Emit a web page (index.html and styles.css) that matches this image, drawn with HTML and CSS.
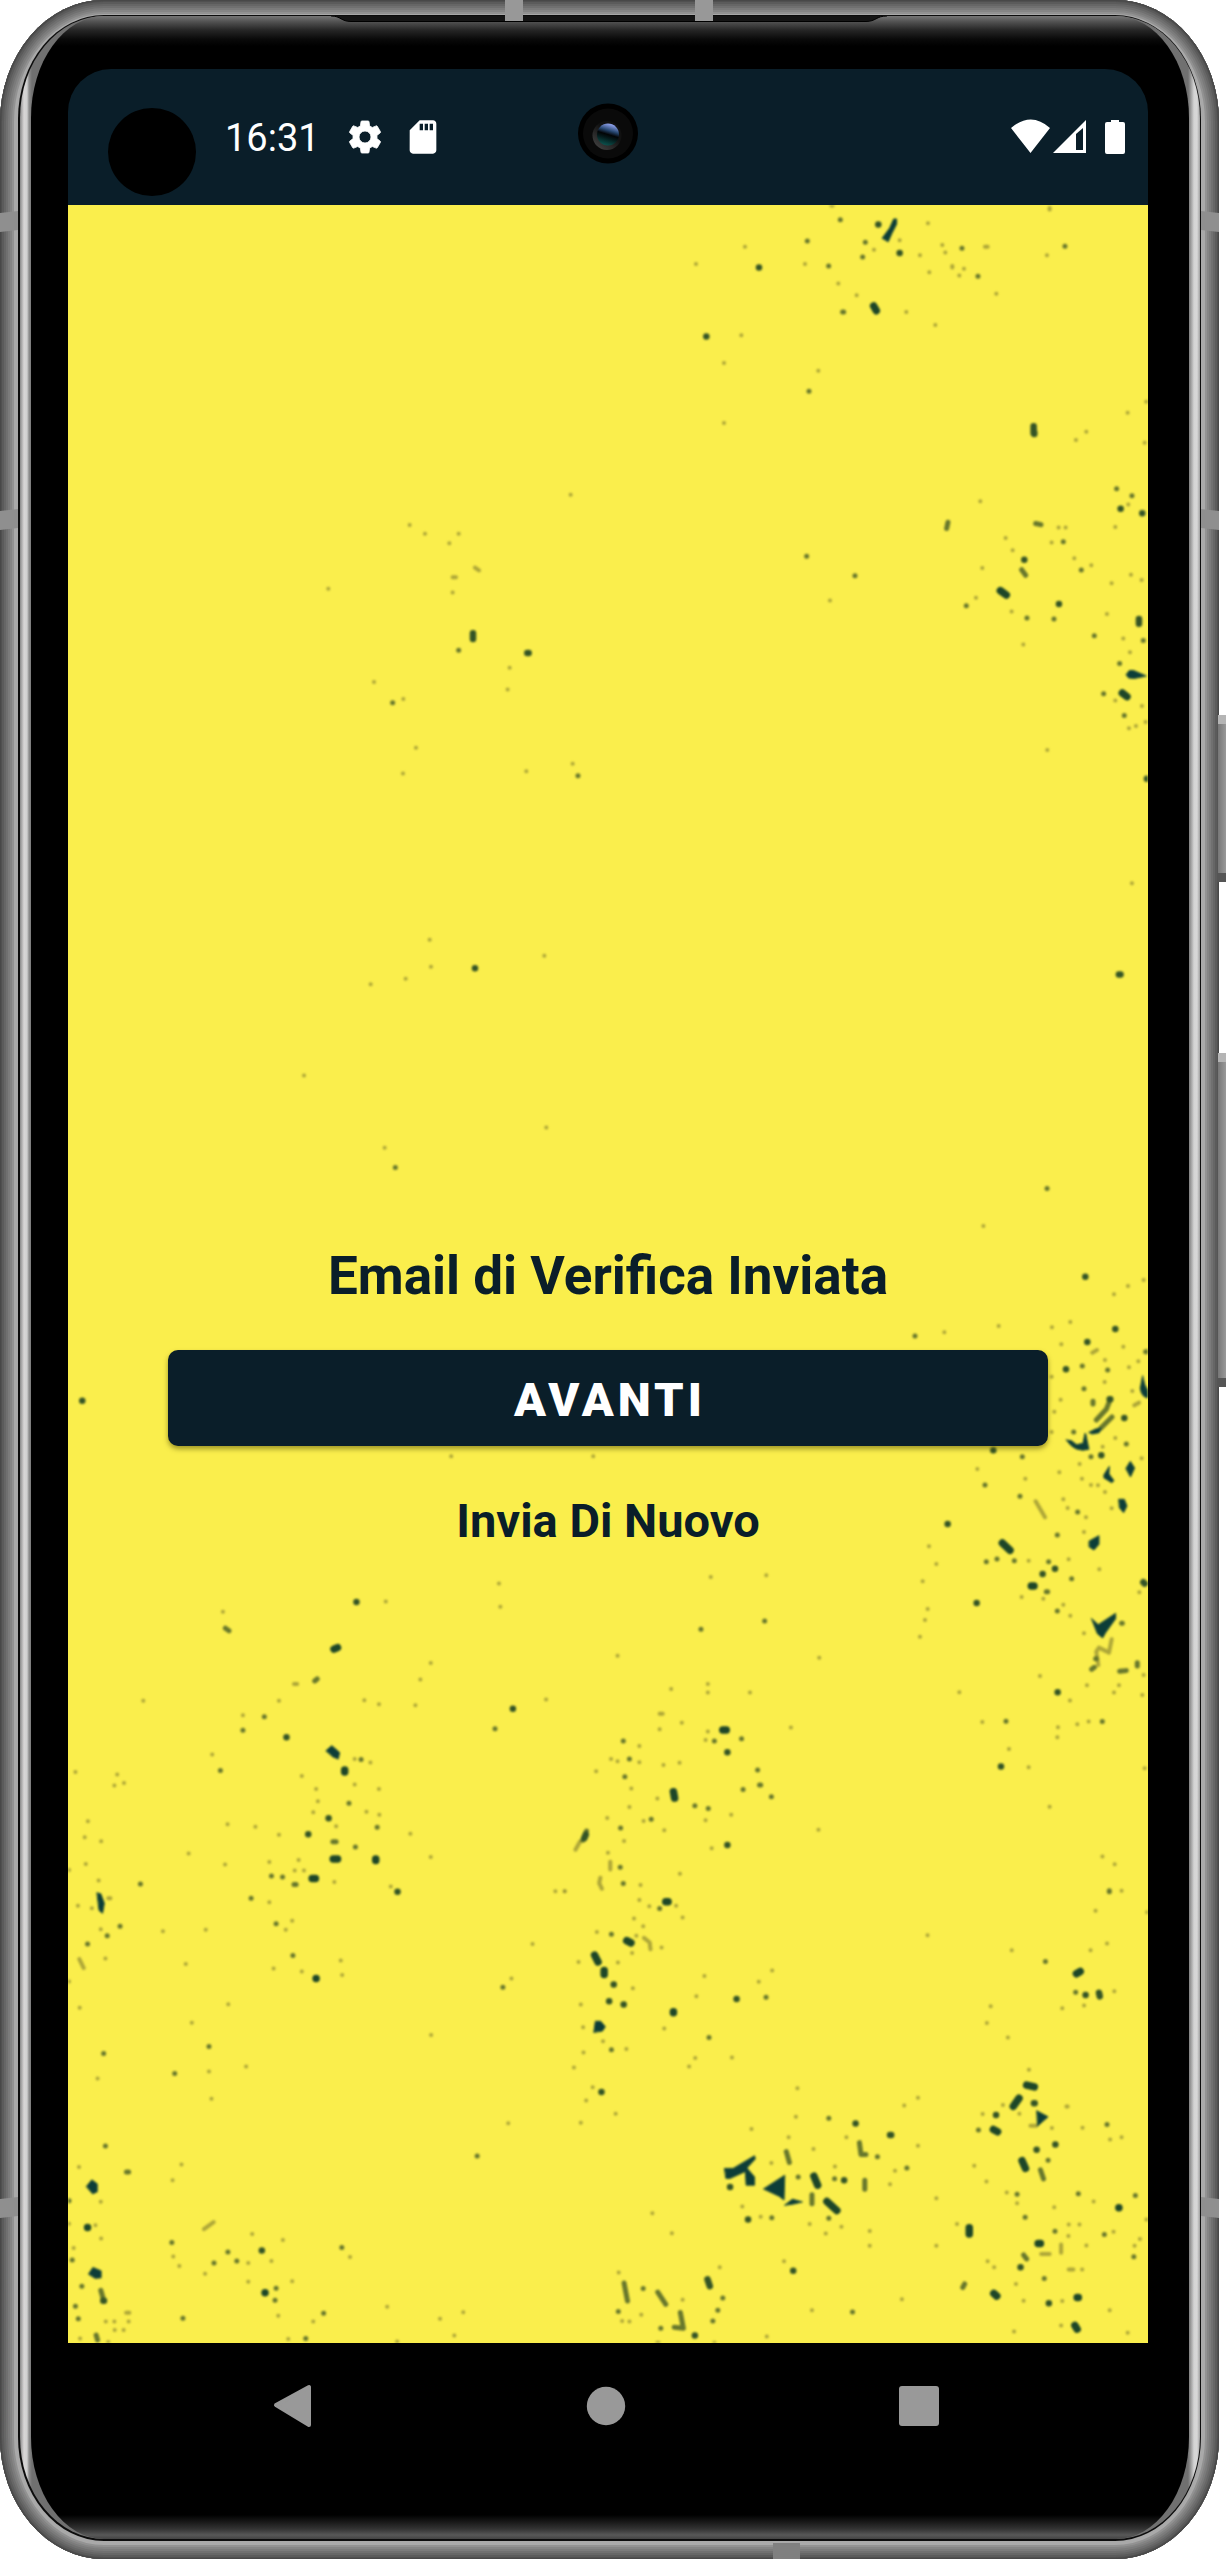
FILE: index.html
```
<!DOCTYPE html>
<html lang="it">
<head>
<meta charset="utf-8">
<title>Email di Verifica Inviata</title>
<link rel="stylesheet" href="styles.css">
</head>
<body>
<div class="device">
  <span class="side-key side-key-power"></span>
  <span class="side-key side-key-volume"></span>
  <div class="frame">
    <span class="band band-top band-t1"></span>
    <span class="band band-top band-t2"></span>
    <span class="band band-bottom"></span>
    <span class="band band-left band-l1"></span>
    <span class="band band-left band-l2"></span>
    <span class="band band-left band-l3"></span>
    <span class="band band-right band-l1"></span>
    <span class="band band-right band-l2"></span>
    <span class="band band-right band-l3"></span>
    <div class="seam">
      <div class="bevel">
        <div class="glass">
          <svg class="earpiece" viewBox="0 0 556 7"><path d="M0 0H556C545 0 545 5.500 535 5.500H20C10 5.500 10 0 0 0Z" fill="#151515"/><path d="M0 0C10 0 10 5.500 20 5.500H535C545 5.500 545 0 556 0" fill="none" stroke="#000" stroke-width="1"/></svg>
          <div class="screen">
            <header class="status">
              <span class="cutout"></span>
              <span class="clock">16:31</span>
              <svg class="icon gear" viewBox="0 0 24 24"><path d="M19.140 12.940c.04-.3.06-.61.06-.94 0-.32-.02-.64-.07-.94l2.030-1.580c.18-.14.23-.41.12-.61l-1.920-3.320c-.12-.22-.37-.29-.59-.22l-2.390.96c-.5-.38-1.030-.7-1.620-.94l-.36-2.540c-.04-.24-.24-.41-.48-.41h-3.840c-.24 0-.43.17-.47.41l-.36 2.540c-.59.24-1.130.57-1.620.94l-2.390-.96c-.22-.08-.47 0-.59.22L2.740 8.870c-.12.21-.08.47.12.61l2.030 1.580c-.05.3-.09.63-.09.94s.02.64.07.94l-2.030 1.580c-.18.14-.23.41-.12.61l1.920 3.320c.12.22.37.29.59.22l2.390-.96c.5.38 1.030.7 1.620.94l.36 2.540c.05.24.24.41.48.41h3.840c.24 0 .44-.17.47-.41l.36-2.540c.59-.24 1.130-.56 1.620-.94l2.390.96c.22.08.47 0 .59-.22l1.920-3.320c.12-.22.07-.47-.12-.61zM12 15.600a3.600 3.600 0 1 1 0-7.200 3.600 3.600 0 0 1 0 7.200z" fill="#fff" stroke="#fff" stroke-width=".5"/></svg>
              <svg class="icon" viewBox="0 0 24 24"><path fill="#fff" d="M18 2h-8L4.020 8 4 20c0 1.100.9 2 2 2h12c1.100 0 2-.9 2-2V4c0-1.100-.9-2-2-2zm-6 6h-2V4h2zm3 0h-2V4h2zm3 0h-2V4h2z"/></svg>
              <svg class="signals" viewBox="0 0 116 36"><path fill="#fff" d="M0 9Q20-8 39 9L19.500 34ZM42 34 75 1V34ZM94 5q0-2 2-2h4V1h8v2h4q2 0 2 2v28q0 2-2 2H96q-2 0-2-2Z"/><path fill="#0a1e29" d="M65 15 72 9V31H65Z"/></svg>
              <svg class="camera" viewBox="0 0 60 60"><defs><linearGradient id="lens" x1=".65" y1="0" x2=".35" y2="1"><stop offset=".05" stop-color="#8b9ee8"/><stop offset=".32" stop-color="#26466f"/><stop offset=".5" stop-color="#020405"/><stop offset=".65" stop-color="#04191a"/><stop offset="1" stop-color="#0b5550"/></linearGradient><linearGradient id="rim" x1="0" y1="1" x2=".8" y2="0"><stop stop-color="#4a4a4a"/><stop offset=".65" stop-color="#111"/></linearGradient></defs><circle cx="30" cy="30" r="30" fill="#000"/><circle cx="30" cy="30" r="25" fill="#0a0a0a"/><circle cx="29" cy="32" r="14.500" fill="url(#rim)"/><circle cx="30" cy="31" r="11" fill="url(#lens)"/></svg>
            </header>
            <main class="content">
              <svg class="speckles" viewBox="69 205 1080 2138">
                <g class="flecks" transform="translate(640 200) scale(.3333 .3954)">
                  <path class="faint" d="M318 118h0M867 59h0M577 14h4M910 114h0M919 133h0M843 140h0M871 183h0M940 167v4M975 174h0M961 191h0M1038 118h8M1224 140h0M1072 237h0M1232 20v4M782 102h0M705 126h0M498 162h0M171 162h0M598 211h0M653 241h0M802 283h0M889 316h0M307 342h0M255 412h0M538 432h0M255 564h0M1466 538h0M1522 510h0M1342 586h0M1311 607h0M1517 614h0M1024 762h0M1280 828h0M1259 828h0M1238 866h0M1429 827h0M1121 886h0M1030 931h0M1011 1006h0M1306 906h0M1357 924h0M1476 948h0M1508 961h0M1418 969h0M1404 1047h0M1118 1041h0M1153 1124h0M1453 1109h0M1473 1144h0M1429 1266h0M1470 1336h0M1491 1330h0M1520 1320h0M1225 1391h0M1509 1280h0M573 1013h0M1100 855h0M1468 770h0"/>
                  <path class="mid" d="M505 104h0M679 107h0M671 144h0M569 167h0M611 283h3M510 484h0M969 122h0M1017 193h0M1278 117h0M503 901h0M648 950h0M982 1026h0M1164 1057h0M1245 1060h0M1273 864h0M1327 936h0M1433 730h0M1479 748h0M1442 1172h0M1513 1114h0M1366 1102h0M1394 1249h0M1456 1304h0M927 815l-4 16M1190 818l16 3M1148 935l12 14M604 50h0"/>
                  <path class="dark" d="M360 171h0M202 345h0M718 62h0M782 134h0M1260 1022h0M1156 910h0M1510 792h0M1445 781h0M1524 1464h0M1186 588v4M1184 572v18M1500 1060v12"/>
                  <path class="heavy" d="M704 268l8 12M1084 988l18 11M1450 1247l14 9"/>
                  <path class="chip" d="M730 96l22-25 12-23h9v13l-14 23-11 21zM1462 1200l9-10h13l38 14-35 6-17-1z"/>
                </g>
                <g class="flecks" transform="translate(860 1260) scale(.3333)">
                  <path class="faint" d="M256 217h0M807 78h0M854 60h0M634 186h0M419 198h0M765 103h0M607 253h0M700 278l14-8M738 300h0M810 322h0M838 304h0M793 260h0M578 350h0M737 366h0M820 393h0M826 436l14-8M605 419h0M586 455h0M578 516h0M769 534h0M848 595h0M731 560h0M662 612h0M601 637h0M669 656h0M696 675h0M717 676h0M738 696h0M758 745h0M613 718h0M626 744h0M681 772h0M675 816h0M355 627h0M499 656h0M210 859h0M232 912h0M191 964h0M206 1047h0M198 1080h0M183 1130h0M509 902h0M629 898h0M721 928h0M488 1011h0M553 1016h0M613 1034h0M634 1067h0M675 1120h0M543 1248h0M684 1276h0M780 1276h0M765 1298h0M854 1245h0M850 1305h0M301 1297h0M633 1322h0M370 1386h0M655 1393h0M689 1385h0M595 1432h0M597 1402h0M450 1467h0M509 1522h0M857 1525h0M530 724l28 48M841 997h0M718 1215l-6-40 8-12 30 15 8-40"/>
                  <path class="mid" d="M168 228h0M670 318h0M746 330h0M675 386h0M644 516h0M696 590h0M802 552h0M490 590h0M378 675h0M483 709h0M656 756h0M595 825h0M382 905h0M414 897h0M466 902h0M569 905h0M638 956h0M562 995h4M595 1053h0M790 1090h-2M835 1208v10M730 1385h0M441 1384h0M782 1234l20-2M702 424v8M860 275h4M712 480l30-32 8-20M725 505l34-34M698 1228l8-6M710 1196h2"/>
                  <path class="dark" d="M679 50h0M769 207h0M685 246h0M621 328h0M727 586h0M796 474h0M403 571h0M266 792h0M353 1029h0M588 926h0M551 942h0M596 1297h0M426 1520h0M853 967l4 4M752 418h2"/>
                  <path class="heavy" d="M430 849l23 22M517 978h8"/>
                  <path class="chip" d="M844 385l7-38q4 30 19 50v17q-23 0-26-29M622 540l15 2 16 12 19-4 6-30 2 1 10 47q-42 12-68-28M690 517l20-10 17-3-6 14-20 4zM801 625l13-21 13 20-12 26zM780 718h16l8 20-10 20-12-14zM691 843l29-16v26l-15 17-14-9zM734 646l17-27-1 23 15 20-7 6-24-15M698 1076l20 18 52-34v16l-30 42-9 16-15-12z"/>
                </g>
                <g class="flecks" transform="translate(60 1580) scale(.3571 .4974)">
                  <path class="faint" d="M915 43h0M1232 7h0M1236 54h0M459 64h0M236 243h0M616 243h0M658 209h9M855 242h0M896 250h0M1012 200h0M1041 167h0M1364 240h0M998 252h0M515 272h0M429 351h0M46 386h0M163 391h0M155 413h0M182 408h0M81 485h0M72 517h0M118 525h0M363 550h0M75 571h0M465 572h0M550 496h0M472 491h0M616 512h0M680 394h0M720 420h0M725 445h0M712 467h0M861 466h0M897 472h0M896 420h0M872 367h0M828 411h0M828 360h0M776 495h0M671 563h0M660 584h0M686 584h0M589 648h0M589 567h0M771 607h0M929 616h0M984 510h0M1041 557h0M111 604h0M138 640h6M92 660h0M53 655h0M28 583h0M117 702h0M130 761h0M57 762l12 18M28 807h0M58 860h0M291 706h0M411 703h0M355 772h0M653 685h0M635 703h0M601 781h0M680 787h0M789 765h0M793 794h0M474 853h0M372 890h0M420 988h0M427 1043h0M524 978h0M108 1002h0M1267 801h0M1326 732h0M1042 915h0M1390 626h0M1416 626h0M1258 1092h0M56 1180h0M343 1175h0M318 1207h0M117 1250h0M102 1297h0M118 1324h0M28 1294h0M41 1343h0M406 1305l27-14M627 1327h0M541 1315h0M320 1360h0M337 1379h0M530 1373h0M595 1369h0M815 1361h0M530 1411h0M653 1410h0M409 1395h0M614 1479h0M642 1526h0M712 1491h0M919 1461h0M1067 1485h0M1132 1472h0M1107 1519h0M188 1473h9M195 1491h0M156 1508h0M131 1491h0M155 1491h0M181 1508h0M59 1525h0M138 1532h0M947 1531h0"/>
                  <path class="mid" d="M466 97l10 5M723 199l-7 4M515 302h0M575 275h0M452 383h0M846 361h0M812 449h0M767 526h9M830 537h0M891 497h0M626 597h0M595 595h0M658 612h6M538 640h0M608 691h0M655 755h0M228 611h0M171 696h0M135 715h0M80 732h0M420 938h0M324 992h0M125 952h0M1221 299h0M1243 819h0M1171 1158h0M130 1138h0M189 1190h6M316 1332h0M473 1351h0M498 1369h0M434 1373h0M792 1342h0M608 1424h0M605 1448h0M741 1474h0M347 1484h0M691 1525h0M64 1420h0M37 1367h0M46 1460h0M54 1485h0M117 1428l8 20M104 1518l4 10M28 1248h0"/>
                  <path class="dark" d="M833 44h0M637 316h0M1271 259h0M698 511h0M948 627h0M568 1348h0M800 383h0M755 479h0"/>
                  <path class="heavy" d="M770 139l10-3M768 561h12M709 600h9M887 561v3M720 801h0M80 1302h0M577 1433h0M800 382v4"/>
                  <path class="dark" d="M124 1449h2"/>
                  <path class="chip" d="M748 343l16-10 22 14-4 13-14-4zM107 629l10 2 10 19-5 20-9-5zM77 1219l15-13 15 8v16l-12 4zM83 1395l12-13 23 7v14l-16 1z"/>
                </g>
                <g class="flecks" transform="translate(560 1640) scale(.3827 .4528)">
                  <path class="faint" d="M153 35h0M680 39h0M389 97h0M389 116h0M263 163h8M263 197h0M321 183h0M293 108h0M383 221h0M389 202h0M210 234h0M210 270h0M153 268h0M136 263h0M273 276h0M315 271h0M97 290h0M606 193h0M499 116h0M189 328h0M184 369h0M257 350h0M126 393h0M221 400h0M275 420h0M170 444h0M383 398h0M399 460h0M450 386h0M678 419h0M128 470h0M134 490v17M108 525l-3 12 7 12M210 574h0M213 541h0M316 516h0M15 555h0M306 587h0M236 588h0M323 613h0M196 615h0M220 632h0M99 645h0M202 653h0M268 679h0M222 658l15 10 2 15M51 711h0M154 712h0M191 691h0M380 742h0M359 787h0M193 769h0M522 755h0M557 730h0M63 855h0M57 805h0M115 886h0M176 903h0M64 911h0M39 944h0M275 858h0M452 922h0M356 923h0M340 942h0M88 988h0M71 1017h0M148 1046h0M57 1066h0M244 1266h0M295 1310h0M963 652h0M1420 478h0M1452 495h0M1470 554h0M1402 598h0M1537 601h0M1432 670h0M1389 685h0M1183 685h0M1282 368h0M1451 776h0M1372 807h0M1315 813h0M1128 809h0M1118 846h0M1173 878h0M1228 949h0M623 990h0M619 1053h0M503 1080h0M600 1098h0M665 1124h0M751 1098h0M721 1163h0M902 1028h0M938 1011h0M938 1117h0M878 1172h0M865 1202h0M555 1155h0M986 1233h0M986 1338h0M479 1251h0M527 1274h0M655 1290h0M697 1311h0M738 1296h0M812 1305h0M812 1338h0M896 1456h0M420 1385h0M588 1372h0M661 1480h0M543 1538h0M1160 1027h0M1107 1047h0M1203 1046h0M1232 1073h15M1326 1030h3M1288 1078h0M1368 1077h0M1440 1103h0M1470 1098h0M1085 1161h0M1117 1196h0M1170 1220h0M1197 1244h0M1294 1253h0M1397 1240h0M1449 1307h0M1331 1316h0M1332 1291h0M1360 1291h0M1378 1337h0M1312 1335v18M1260 1356h22M1535 1280h0M1518 1323h0M1504 1338h0M1367 1390h0M1332 1390h12M1137 1385h0M1120 1372h0M1194 1422h0M1214 1459h0M1315 1460h0M1439 1480h0M1486 1530h0M1312 1514h0M1189 1527h0M1040 1290h0M165 1504h0M184 1505h0M215 1490h0M323 1457h0M156 1397h0M257 1552h3M406 1552h0M43 463l12-18"/>
                  <path class="mid" d="M477 218h0M406 223h0M168 223h0M184 263h0M172 302h0M161 415h0M355 366h0M390 372h0M241 396h0M481 330h0M519 287h0M524 320h3M555 346h0M160 502h0M168 538h0M263 593h0M137 650h0M541 789h0M392 878h0M137 905h0M62 442l10-20M1438 554v2M1271 710h0M1350 778h0M705 1056h0M832 1141h0M909 1166h0M785 1110l4 26h13M799 1193v20M625 1186h0M594 1130l8 24M661 1225v20M556 1276h0M705 1277h0M720 1190h0M1096 1082h0M1432 1070h0M1278 1149h0M1258 1170l8 20M1197 1224h0M1357 1223h0M1506 1227h0M1218 1275h0M1296 1306h0M1425 1313h0M1502 1362h0M1214 1358l8 9M1268 1410h0M1055 1430l5-8M767 1484h0M170 1420l9 40M220 1432h0M155 1483h0M258 1440l21 27M266 1520h0M402 1504h0M415 1480h0M428 1453h0M317 1485l8 35-24-2"/>
                  <path class="dark" d="M66 438l4-8M440 248h0M440 453h0M464 793h0M143 761h0M131 798h0M169 805h0M111 998h0M1376 784h0M1411 779l2 8M775 1068h0M865 1093h3M745 1193h0M447 1208h0M494 1280h0M612 1393h0M1142 1049h0M1241 1023h2M1297 1114h0M1248 1126h0M1280 1465h0M1206 1385h0M388 1412l6 15M355 1536h0"/>
                  <path class="heavy" d="M428 199h9M299 335l3 14M279 578h6M177 664l11 5M93 696l9 15M118 730v9M299 821v2M1352 737l10-5M1222 983l20 4M1202 1012l-15 18M1135 1081l11 5M1210 1150l9 17M1072 1298v14M1463 1254h0M1252 1333h6M1136 1443l8 6M1354 1452h3M1348 1514l6 8M666 1184l10 20M700 1240l26 20"/>
                  <path class="chip" d="M91 866l4-24h14l12 12-7 9zM433 1167h22l56-28 2 7-22 20 20 20v18h-22l-2-30-40 15h-10zM535 1212l55-30-2 55-12-8zM590 1248l20-13 26 6-25 5zM1249 1040l29 13-27 20z"/>
                </g>
                <g class="flecks" transform="translate(280 480) scale(.3333 .4592)">
                  <path class="faint" d="M875 32h0M539 117h0M438 117h0M392 98h0M511 138h0M588 191l12 6M521 212h10M521 245h0M148 237h0M686 456h0M692 409h0M373 477h0M285 440h0M372 639h0M411 583h0M881 618h0M742 634h0M452 1001h0M456 1060h0M380 1086h0M275 1098h0M796 1036h0M75 1297h0M802 1410h0M317 1454h0"/>
                  <path class="mid" d="M539 371h0M341 485h0M897 644h0M349 1497h0"/>
                  <path class="dark" d="M582 334v12M745 377h4M588 1063h0"/>
                </g>
                <g class="flecks" transform="scale(1.6325)">
                  <path class="faint" d="M694 541h0M603 751h0M470 965h0M436 966h0M277 892h0M364 892h0M645 813h0"/>
                  <path class="mid" d="M642 728h0M430 998h0M469 993h0"/>
                  <path class="dark" d="M686 597h1M51 858h0"/>
                </g>
              </svg>
              <h1 class="title">Email di Verifica Inviata</h1>
              <button class="next">AVANTI</button>
              <button class="resend">Invia Di Nuovo</button>
            </main>
            <nav class="navbar">
              <svg viewBox="0 0 40 44"><path d="M3 21 36 3V41Z" fill="#999" stroke="#999" stroke-width="4" stroke-linejoin="round"/></svg>
              <svg viewBox="0 0 40 44"><circle cx="20" cy="22" r="19.200" fill="#999"/></svg>
              <svg viewBox="0 0 40 44"><rect y="2" width="40" height="40" rx="3" fill="#999"/></svg>
            </nav>
          </div>
        </div>
      </div>
    </div>
  </div>
</div>
</body>
</html>
```
FILE: styles.css
```
* { box-sizing: border-box; }

body {
  margin: 0;
  background: #fff;
  font-family: Roboto, "Liberation Sans", sans-serif;
}

.device {
  position: relative;
  width: 1226px;
  height: 2559px;
  overflow: hidden;
}

.frame {
  position: relative;
  width: 1219px;
  height: 2559px;
  padding: 15px 18px 18px;
  border-radius: 104px / 122px;
  background: #a9a9a9;
  overflow: hidden;
  box-shadow:
    inset 0 0 0 1px #484848,
    inset 0 0 0 2px #505050,
    inset 0 0 0 4px #5b5b5b,
    inset 0 0 0 6px #666,
    inset 0 0 0 8px #707070,
    inset 0 0 0 10px #7b7b7b,
    inset 0 0 0 12px #858585,
    inset 0 0 0 14px #929292;
}

.seam {
  height: 100%;
  padding: 1px 1.5px 2px;
  border-radius: 86px / 104px;
  background: #0c0c0c;
}

.bevel {
  height: 100%;
  padding: 0 11px;
  border-radius: 84px / 102px;
  background: linear-gradient(90deg, #8a8a8a, #d8d6d6 4px, #d0d0d0 7px, #8e8e8e 9px, #707070 12px, #707070 calc(100% - 12px), #8e8e8e calc(100% - 10px), #d4d4d4 calc(100% - 6px), #d8d8d8 calc(100% - 3px), #a0a0a0);
}

.glass {
  position: relative;
  height: 100%;
  padding: 53px 39px 0 37.5px;
  border-radius: 73px / 102px;
  background: linear-gradient(#777, #505050 6px, #262626 14px, #0a0a0a 23px, #000 30px, #000 calc(100% - 24px), #151515 calc(100% - 18px), #333 calc(100% - 10px), #585858 calc(100% - 4px), #444);
}

.earpiece {
  position: absolute;
  left: 300px;
  top: 0;
  width: 556px;
  height: 7px;
}

.band { position: absolute; background: #989898; }
.band-top { top: 0; height: 21px; width: 18px; z-index: 1; }
.band-t1 { left: 505px; }
.band-t2 { left: 695px; }
.band-bottom { left: 773px; bottom: 0; width: 27px; height: 16px; background: #808080; }
.band-left, .band-right { width: 18px; height: 19px; background: #8f8f8f; }
.band-left { left: 0; transform: skewY(-6deg); }
.band-right { right: 0; transform: skewY(6deg); }
.band-l1 { top: 212px; }
.band-l2 { top: 510px; }
.band-l3 { top: 2198px; }

.side-key {
  position: absolute;
  right: 0;
  z-index: 1;
  width: 9px;
  border-left: 1px solid #555;
  background: linear-gradient(#b5b5b5 0 9px, transparent 9px calc(100% - 9px), #555 calc(100% - 9px)), linear-gradient(90deg, #777, #999);
}
.side-key-power { top: 715px; height: 167px; }
.side-key-volume { top: 1053px; height: 334px; }

.screen { width: 1080px; }

.status {
  position: relative;
  display: flex;
  align-items: center;
  height: 136px;
  padding: 0 21px 0 40px;
  border-radius: 43px 43px 0 0;
  background: #0a1e29;
}

.cutout {
  width: 88px;
  height: 88px;
  margin-top: 30px;
  border-radius: 50%;
  background: #000;
}

.clock {
  width: 94px;
  margin: 2px 26px 0 29px;
  color: #fff;
  font-size: 38px;
  line-height: 44px;
}

.icon { width: 40px; height: 40px; }
.gear { margin-right: 18px; }
.signals { width: 116px; height: 36px; margin-left: auto; }

.camera {
  position: absolute;
  left: 509.500px;
  top: 34px;
  width: 60px;
  height: 61px;
}

.content {
  position: relative;
  display: flex;
  flex-direction: column;
  align-items: center;
  height: 2138px;
  padding-top: 1040px;
  background: #faee4c;
  overflow: hidden;
}

.speckles {
  position: absolute;
  inset: 0;
  width: 1080px;
  height: 2138px;
  filter: blur(1px);
}

.flecks path {
  fill: none;
  stroke-linecap: round;
  stroke-linejoin: round;
  vector-effect: non-scaling-stroke;
}
.flecks .faint { stroke: #948f32; stroke-width: 4px; opacity: .75; }
.flecks .mid { stroke: #586b2a; stroke-width: 5px; opacity: .9; }
.flecks .dark { stroke: #345426; stroke-width: 6.500px; }
.flecks .heavy { stroke: #1d4628; stroke-width: 7.500px; }
.flecks .chip { fill: #0c3d38; stroke: #1d4a38; stroke-width: 1px; }

.title, .next, .resend {
  position: relative;
  margin: 0;
  color: #0a1e29;
}

.title {
  font-size: 53px;
  font-weight: 700;
  line-height: 62px;
  white-space: nowrap;
}

.next {
  width: 880px;
  height: 96px;
  margin-top: 43px;
  padding: 4px 0 0 4px;
  border: 0;
  border-radius: 10px;
  background: #0a1e29;
  box-shadow: 0 3px 5px rgba(70, 65, 0, .5);
  color: #fff;
  font: 900 47px/56px Roboto, sans-serif;
  letter-spacing: 4px;
}

.resend {
  margin-top: 47px;
  padding: 0;
  border: 0;
  background: none;
  font: 700 47px/56px Roboto, sans-serif;
}

.navbar {
  display: flex;
  align-items: center;
  justify-content: space-between;
  height: 126px;
  padding: 0 209px 0 205px;
}
.navbar svg { width: 40px; height: 44px; }
```
